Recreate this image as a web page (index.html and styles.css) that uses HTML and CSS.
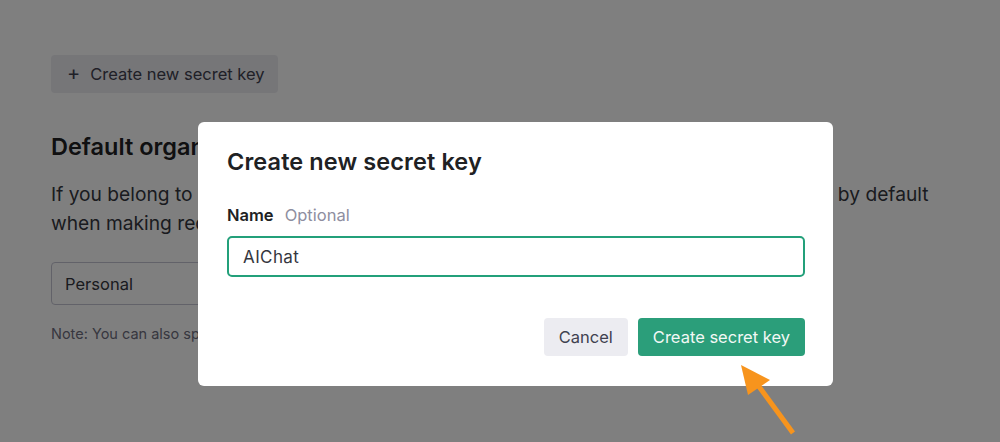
FILE: index.html
```html
<!DOCTYPE html>
<html>
<head>
<meta charset="utf-8">
<link rel="stylesheet" href="styles.css">
</head>
<body>
<main class="page">
  <button class="new-key"><span class="plus">+</span>Create new secret key</button>
  <h2 class="org-title">Default organization</h2>
  <p class="org-text">If you belong to multiple organizations, this setting controls which organization is used by default<br>when making requests with the API keys above.</p>
  <div class="select">Personal</div>
  <p class="note">Note: You can also specify which organization to use for each API request. See Authentication to learn more.</p>
</main>
<div class="backdrop"></div>
<div class="modal">
  <h3 class="modal-title">Create new secret key</h3>
  <div class="label"><b>Name</b><span class="opt">Optional</span></div>
  <div class="input">AIChat</div>
  <div class="actions">
    <button class="btn cancel">Cancel</button>
    <button class="btn primary">Create secret key</button>
  </div>
</div>
<svg class="arrow" width="80" height="90" viewBox="0 0 80 90">
  <line x1="63" y1="78" x2="22" y2="22" stroke="#f7941d" stroke-width="5" stroke-linecap="butt"/>
  <polygon points="11,10 40,25 18,40" fill="#f7941d"/>
</svg>
</body>
</html>
```
FILE: styles.css
```css
html, body { margin: 0; padding: 0; }
body {
  width: 1000px; height: 442px; overflow: hidden;
  background: #fff;
  font-family: Inter, "Noto Sans", sans-serif;
  color: #202123;
  position: relative;
}
.page { padding: 55px 0 0 51px; }
.new-key {
  display: flex; align-items: center; gap: 10px;
  height: 38px; padding: 0 13px 0 16px;
  border: none; border-radius: 4px;
  background: #ececf1; color: #40414f;
  font-family: inherit; font-size: 16.5px; white-space: nowrap;
}
.plus { font-size: 20px; line-height: 1; margin-top: -2px; }
.org-title { margin: 39px 0 0; font-size: 23.5px; font-weight: 600; line-height: 30px; color: #202123; }
.org-text { margin: 18px 0 0; font-size: 19.2px; line-height: 29px; color: #353740; }
.select {
  margin-top: 24px; width: 300px; height: 43px; box-sizing: border-box;
  border: 1px solid #c5c5d2; border-radius: 4px;
  padding: 0 13px; display: flex; align-items: center;
  font-size: 16.5px; color: #353740;
}
.note { margin: 20px 0 0; font-size: 14.5px; color: #6e6e80; }
.backdrop { position: fixed; inset: 0; background: rgba(0,0,0,0.5); }
.modal {
  position: absolute; left: 198px; top: 122px; width: 635px; height: 264px;
  box-sizing: border-box; padding: 25px 28px 30px 29px;
  background: #fff; border-radius: 6px;
  display: flex; flex-direction: column;
}
.modal-title { margin: 0; font-size: 23.5px; font-weight: 600; line-height: 30px; color: #202123; letter-spacing: 0.1px; }
.label { margin-top: 28px; font-size: 16.5px; line-height: 20px; display: flex; gap: 11px; }
.label b { font-weight: 600; color: #202123; }
.opt { color: #8e8ea0; }
.input {
  margin-top: 11px; height: 41px; box-sizing: border-box;
  border: 2px solid #23a07a; border-radius: 5px;
  padding: 0 14px; display: flex; align-items: center;
  font-size: 17px; color: #353740; letter-spacing: 0.4px;
}
.actions { margin-top: auto; display: flex; justify-content: flex-end; gap: 10px; }
.btn {
  height: 38px; border: none; border-radius: 4px; white-space: nowrap;
  font-family: inherit; font-size: 16.5px; padding: 0 15px;
}
.cancel { background: #ececf1; color: #40414f; }
.primary { background: #2b9e7a; color: #f2f8f5; padding: 0 15px; }
.arrow { position: absolute; left: 730px; top: 355px; }
```
